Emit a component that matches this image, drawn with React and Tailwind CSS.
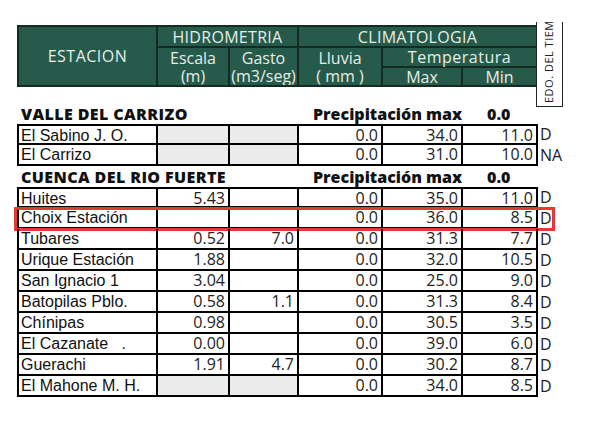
import React from "react";

const valle = [
  { name: "El Sabino J. O.", gray: true, esc: "", gas: "", llu: "0.0", max: "34.0", min: "11.0", edo: "D" },
  { name: "El Carrizo", gray: true, esc: "", gas: "", llu: "0.0", max: "31.0", min: "10.0", edo: "NA" },
];

const fuerte = [
  { name: "Huites", esc: "5.43", gas: "", llu: "0.0", max: "35.0", min: "11.0", edo: "D" },
  { name: "Choix Estación", esc: "", gas: "", llu: "0.0", max: "36.0", min: "8.5", edo: "D", mark: true },
  { name: "Tubares", esc: "0.52", gas: "7.0", llu: "0.0", max: "31.3", min: "7.7", edo: "D" },
  { name: "Urique Estación", esc: "1.88", gas: "", llu: "0.0", max: "32.0", min: "10.5", edo: "D" },
  { name: "San Ignacio 1", esc: "3.04", gas: "", llu: "0.0", max: "25.0", min: "9.0", edo: "D" },
  { name: "Batopilas Pblo.", esc: "0.58", gas: "1.1", llu: "0.0", max: "31.3", min: "8.4", edo: "D" },
  { name: "Chínipas", esc: "0.98", gas: "", llu: "0.0", max: "30.5", min: "3.5", edo: "D" },
  { name: "El Cazanate   .", esc: "0.00", gas: "", llu: "0.0", max: "39.0", min: "6.0", edo: "D" },
  { name: "Guerachi", esc: "1.91", gas: "4.7", llu: "0.0", max: "30.2", min: "8.7", edo: "D" },
  { name: "El Mahone M. H.", gray: true, esc: "", gas: "", llu: "0.0", max: "34.0", min: "8.5", edo: "D" },
];

const num = "font-['Open_Sans',sans-serif] text-[16px] text-right pr-[3px] border-r-2 border-b-2 border-black text-[#222]";

const Row = ({ r, first }) => {
  const top = first ? "border-t-2" : "";
  const shade = r.gray ? "bg-[#ebebeb]" : "";
  return (
    <div className="relative flex h-[21px] items-center leading-[19px]">
      <div className={`w-[141px] h-full border-l-2 border-r-2 border-b-2 border-black pl-[2px] font-['Liberation_Sans',sans-serif] text-[16px] text-[#111] whitespace-pre ${top}`}>
        {r.name}
      </div>
      <div className={`w-[72px] h-full ${num} ${top} ${shade}`}>{r.esc}</div>
      <div className={`w-[69px] h-full ${num} ${top} ${shade}`}>{r.gas}</div>
      <div className={`w-[84px] h-full ${num} ${top}`}>{r.llu}</div>
      <div className={`w-[80px] h-full ${num} ${top}`}>{r.max}</div>
      <div className={`w-[75px] h-full ${num} ${top}`}>{r.min}</div>
      <div className="pl-[2px] font-['Open_Sans',sans-serif] text-[16px] text-[#222]">{r.edo}</div>
      {r.mark && (
        <div className="absolute left-[-3px] top-[-1px] w-[541px] h-[24px] border-[3px] border-[#e53935]" />
      )}
    </div>
  );
};

const Title = ({ text }) => (
  <div className="flex h-[21px] items-center font-['Open_Sans',sans-serif] font-extrabold text-[16px] text-[#111]">
    <div className="w-[296px] pl-[4px] tracking-[0.4px]">{text}</div>
    <div className="w-[174px]">Precipitación max</div>
    <div>0.0</div>
  </div>
);

const hc = "bg-[#265b4b] text-[#e6eee8] flex items-center justify-center leading-[18px] text-[16px]";

export default function App() {
  return (
    <div className="relative w-[603px] h-[424px] bg-white pl-[17px] pt-[25px] font-['Open_Sans',sans-serif]">
      <div className="relative w-[547px]">
        <div className="grid w-[521px] grid-cols-[137px_70px_67px_82px_78px_73px] grid-rows-[19px_18px_17px] gap-[2px] bg-[#142a22] p-[2px]">
          <div className={`${hc} row-span-3 tracking-[0.5px]`}>ESTACION</div>
          <div className={`${hc} col-span-2 tracking-[0.3px]`}>HIDROMETRIA</div>
          <div className={`${hc} col-span-3 tracking-[0.3px]`}>CLIMATOLOGIA</div>
          <div className={`${hc} row-span-2 flex-col`}>
            <span>Escala</span>
            <span>(m)</span>
          </div>
          <div className={`${hc} row-span-2 flex-col whitespace-nowrap overflow-hidden`}>
            <span>Gasto</span>
            <span>(m3/seg)</span>
          </div>
          <div className={`${hc} row-span-2 flex-col`}>
            <span>Lluvia</span>
            <span>( mm )</span>
          </div>
          <div className={`${hc} col-span-2 tracking-[0.5px]`}>Temperatura</div>
          <div className={hc}>Max</div>
          <div className={hc}>Min</div>
        </div>
        <div className="absolute left-[519px] top-[-3px] w-[27px] h-[85px] border-x-[1.5px] border-b-[1.5px] border-[#222] overflow-hidden bg-white">
          <div className="absolute bottom-[3px] left-[4px] origin-bottom-left -rotate-90 translate-x-[16px] whitespace-nowrap text-[11px] leading-[16px] text-[#222] tracking-[0.5px]">
            EDO. DEL TIEMPO
          </div>
        </div>
      </div>
      <div className="mt-[16px]">
        <Title text="VALLE DEL CARRIZO" />
        {valle.map((r, i) => (
          <Row key={r.name} r={r} first={i === 0} />
        ))}
        <Title text="CUENCA DEL RIO FUERTE" />
        {fuerte.map((r, i) => (
          <Row key={r.name} r={r} first={i === 0} />
        ))}
      </div>
    </div>
  );
}
